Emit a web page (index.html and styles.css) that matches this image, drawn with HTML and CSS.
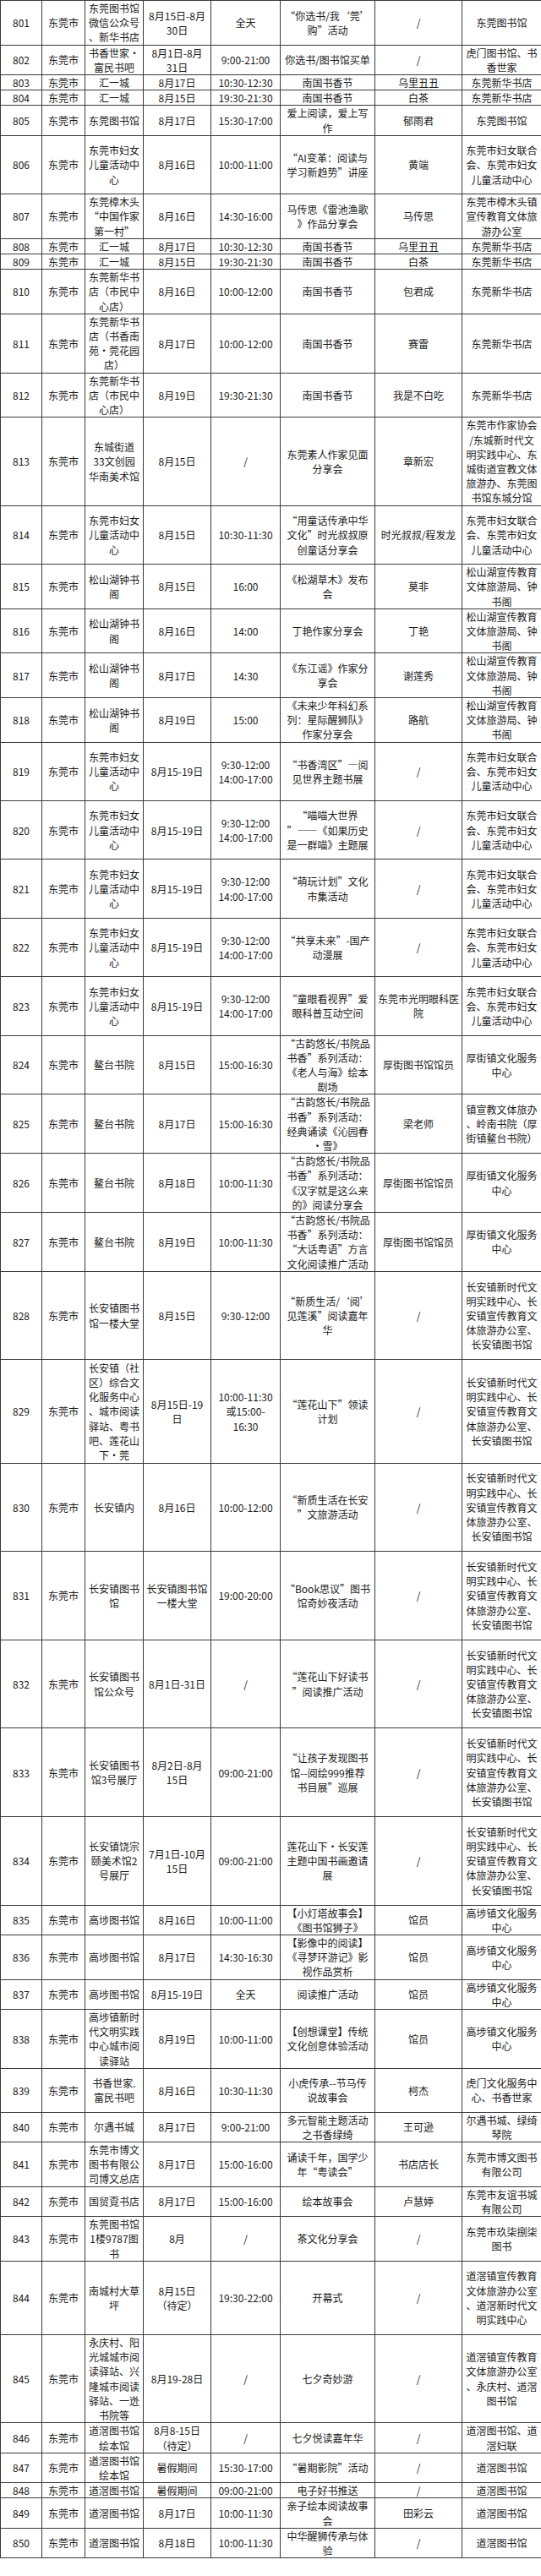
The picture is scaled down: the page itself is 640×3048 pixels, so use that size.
FILE: index.html
```html
<!DOCTYPE html>
<html lang="zh-CN">
<head>
<meta charset="utf-8">
<title>活动表</title>
<link rel="stylesheet" href="styles.css">
</head>
<body>
<table class="sheet">
<colgroup>
<col class="c-no"><col class="c-city"><col class="c-place"><col class="c-date"><col class="c-time"><col class="c-act"><col class="c-who"><col class="c-org">
</colgroup>
<tbody>
<tr class="n3"><td>801</td><td>东莞市</td><td>东莞图书馆<br>微信公众号<br>、新华书店</td><td>8月15日-8月<br>30日</td><td>全天</td><td>“你选书/我‘莞’<br>购”活动</td><td>/</td><td>东莞图书馆</td></tr>
<tr class="n2"><td>802</td><td>东莞市</td><td>书香世家·<br>富民书吧</td><td>8月1日-8月<br>31日</td><td>9:00-21:00</td><td>你选书/图书馆买单</td><td>/</td><td>虎门图书馆、书<br>香世家</td></tr>
<tr class="n1"><td>803</td><td>东莞市</td><td>汇一城</td><td>8月17日</td><td>10:30-12:30</td><td>南国书香节</td><td>乌里丑丑</td><td>东莞新华书店</td></tr>
<tr class="n1"><td>804</td><td>东莞市</td><td>汇一城</td><td>8月15日</td><td>19:30-21:30</td><td>南国书香节</td><td>白茶</td><td>东莞新华书店</td></tr>
<tr class="n2"><td>805</td><td>东莞市</td><td>东莞图书馆</td><td>8月17日</td><td>15:30-17:00</td><td>爱上阅读，爱上写<br>作</td><td>郁雨君</td><td>东莞图书馆</td></tr>
<tr class="n4"><td>806</td><td>东莞市</td><td>东莞市妇女<br>儿童活动中<br>心</td><td>8月16日</td><td>10:00-11:00</td><td>“AI变革：阅读与<br>学习新趋势”讲座</td><td>黄端</td><td>东莞市妇女联合<br>会、东莞市妇女<br>儿童活动中心</td></tr>
<tr class="n3"><td>807</td><td>东莞市</td><td>东莞樟木头<br>“中国作家<br>第一村”</td><td>8月16日</td><td>14:30-16:00</td><td>马传思《雷池渔歌<br>》作品分享会</td><td>马传思</td><td>东莞市樟木头镇<br>宣传教育文体旅<br>游办公室</td></tr>
<tr class="n1"><td>808</td><td>东莞市</td><td>汇一城</td><td>8月17日</td><td>10:30-12:30</td><td>南国书香节</td><td>乌里丑丑</td><td>东莞新华书店</td></tr>
<tr class="n1"><td>809</td><td>东莞市</td><td>汇一城</td><td>8月15日</td><td>19:30-21:30</td><td>南国书香节</td><td>白茶</td><td>东莞新华书店</td></tr>
<tr class="n3"><td>810</td><td>东莞市</td><td>东莞新华书<br>店（市民中<br>心店）</td><td>8月16日</td><td>10:00-12:00</td><td>南国书香节</td><td>包君成</td><td>东莞新华书店</td></tr>
<tr class="n4"><td>811</td><td>东莞市</td><td>东莞新华书<br>店（书香南<br>苑·莞花园<br>店）</td><td>8月17日</td><td>10:00-12:00</td><td>南国书香节</td><td>赛雷</td><td>东莞新华书店</td></tr>
<tr class="n3"><td>812</td><td>东莞市</td><td>东莞新华书<br>店（市民中<br>心店）</td><td>8月19日</td><td>19:30-21:30</td><td>南国书香节</td><td>我是不白吃</td><td>东莞新华书店</td></tr>
<tr class="n6"><td>813</td><td>东莞市</td><td>东城街道<br>33文创园<br>华南美术馆</td><td>8月15日</td><td>/</td><td>东莞素人作家见面<br>分享会</td><td>章新宏</td><td>东莞市作家协会<br>/东城新时代文<br>明实践中心、东<br>城街道宣教文体<br>旅游办、东莞图<br>书馆东城分馆</td></tr>
<tr class="n4"><td>814</td><td>东莞市</td><td>东莞市妇女<br>儿童活动中<br>心</td><td>8月15日</td><td>10:30-11:30</td><td>“用童话传承中华<br>文化”时光叔叔原<br>创童话分享会</td><td>时光叔叔/程发龙</td><td>东莞市妇女联合<br>会、东莞市妇女<br>儿童活动中心</td></tr>
<tr class="n3"><td>815</td><td>东莞市</td><td>松山湖钟书<br>阁</td><td>8月15日</td><td>16:00</td><td>《松湖草木》发布<br>会</td><td>莫非</td><td>松山湖宣传教育<br>文体旅游局、钟<br>书阁</td></tr>
<tr class="n3"><td>816</td><td>东莞市</td><td>松山湖钟书<br>阁</td><td>8月16日</td><td>14:00</td><td>丁艳作家分享会</td><td>丁艳</td><td>松山湖宣传教育<br>文体旅游局、钟<br>书阁</td></tr>
<tr class="n3"><td>817</td><td>东莞市</td><td>松山湖钟书<br>阁</td><td>8月17日</td><td>14:30</td><td>《东江谣》作家分<br>享会</td><td>谢莲秀</td><td>松山湖宣传教育<br>文体旅游局、钟<br>书阁</td></tr>
<tr class="n3"><td>818</td><td>东莞市</td><td>松山湖钟书<br>阁</td><td>8月19日</td><td>15:00</td><td>《未来少年科幻系<br>列：星际醒狮队》<br>作家分享会</td><td>路航</td><td>松山湖宣传教育<br>文体旅游局、钟<br>书阁</td></tr>
<tr class="n4"><td>819</td><td>东莞市</td><td>东莞市妇女<br>儿童活动中<br>心</td><td>8月15-19日</td><td>9:30-12:00<br>14:00-17:00</td><td>“书香湾区”—阅<br>见世界主题书展</td><td>/</td><td>东莞市妇女联合<br>会、东莞市妇女<br>儿童活动中心</td></tr>
<tr class="n4"><td>820</td><td>东莞市</td><td>东莞市妇女<br>儿童活动中<br>心</td><td>8月15-19日</td><td>9:30-12:00<br>14:00-17:00</td><td>“喵喵大世界<br>”——《如果历史<br>是一群喵》主题展</td><td>/</td><td>东莞市妇女联合<br>会、东莞市妇女<br>儿童活动中心</td></tr>
<tr class="n4"><td>821</td><td>东莞市</td><td>东莞市妇女<br>儿童活动中<br>心</td><td>8月15-19日</td><td>9:30-12:00<br>14:00-17:00</td><td>“萌玩计划”文化<br>市集活动</td><td>/</td><td>东莞市妇女联合<br>会、东莞市妇女<br>儿童活动中心</td></tr>
<tr class="n4"><td>822</td><td>东莞市</td><td>东莞市妇女<br>儿童活动中<br>心</td><td>8月15-19日</td><td>9:30-12:00<br>14:00-17:00</td><td>“共享未来”-国产<br>动漫展</td><td>/</td><td>东莞市妇女联合<br>会、东莞市妇女<br>儿童活动中心</td></tr>
<tr class="n4"><td>823</td><td>东莞市</td><td>东莞市妇女<br>儿童活动中<br>心</td><td>8月15-19日</td><td>9:30-12:00<br>14:00-17:00</td><td>“童眼看视界”爱<br>眼科普互动空间</td><td>东莞市光明眼科医<br>院</td><td>东莞市妇女联合<br>会、东莞市妇女<br>儿童活动中心</td></tr>
<tr class="n4"><td>824</td><td>东莞市</td><td>鳌台书院</td><td>8月15日</td><td>15:00-16:30</td><td>“古韵悠长/书院品<br>书香”系列活动：<br>《老人与海》绘本<br>剧场</td><td>厚街图书馆馆员</td><td>厚街镇文化服务<br>中心</td></tr>
<tr class="n4"><td>825</td><td>东莞市</td><td>鳌台书院</td><td>8月17日</td><td>15:00-16:30</td><td>“古韵悠长/书院品<br>书香”系列活动：<br>经典诵读《沁园春<br>•雪》</td><td>梁老师</td><td>镇宣教文体旅办<br>、岭南书院（厚<br>街镇鳌台书院）</td></tr>
<tr class="n4"><td>826</td><td>东莞市</td><td>鳌台书院</td><td>8月18日</td><td>10:00-11:30</td><td>“古韵悠长/书院品<br>书香”系列活动：<br>《汉字就是这么来<br>的》阅读分享会</td><td>厚街图书馆馆员</td><td>厚街镇文化服务<br>中心</td></tr>
<tr class="n4"><td>827</td><td>东莞市</td><td>鳌台书院</td><td>8月19日</td><td>10:00-11:30</td><td>“古韵悠长/书院品<br>书香”系列活动：<br>“大话粤语”方言<br>文化阅读推广活动</td><td>厚街图书馆馆员</td><td>厚街镇文化服务<br>中心</td></tr>
<tr class="n6"><td>828</td><td>东莞市</td><td>长安镇图书<br>馆一楼大堂</td><td>8月15日</td><td>9:30-12:00</td><td>“新质生活/‘阅’<br>见莲溪”阅读嘉年<br>华</td><td>/</td><td>长安镇新时代文<br>明实践中心、长<br>安镇宣传教育文<br>体旅游办公室、<br>长安镇图书馆</td></tr>
<tr class="n7"><td>829</td><td>东莞市</td><td>长安镇（社<br>区）综合文<br>化服务中心<br>、城市阅读<br>驿站、粤书<br>吧、莲花山<br>下·莞</td><td>8月15日-19<br>日</td><td>10:00-11:30<br>或15:00-<br>16:30</td><td>“莲花山下”领读<br>计划</td><td>/</td><td>长安镇新时代文<br>明实践中心、长<br>安镇宣传教育文<br>体旅游办公室、<br>长安镇图书馆</td></tr>
<tr class="n6"><td>830</td><td>东莞市</td><td>长安镇内</td><td>8月16日</td><td>10:00-12:00</td><td>“新质生活在长安<br>”文旅游活动</td><td>/</td><td>长安镇新时代文<br>明实践中心、长<br>安镇宣传教育文<br>体旅游办公室、<br>长安镇图书馆</td></tr>
<tr class="n6"><td>831</td><td>东莞市</td><td>长安镇图书<br>馆</td><td>长安镇图书馆<br>一楼大堂</td><td>19:00-20:00</td><td>“Book思议”图书<br>馆奇妙夜活动</td><td>/</td><td>长安镇新时代文<br>明实践中心、长<br>安镇宣传教育文<br>体旅游办公室、<br>长安镇图书馆</td></tr>
<tr class="n6"><td>832</td><td>东莞市</td><td>长安镇图书<br>馆公众号</td><td>8月1日-31日</td><td>/</td><td>“莲花山下好读书<br>”阅读推广活动</td><td>/</td><td>长安镇新时代文<br>明实践中心、长<br>安镇宣传教育文<br>体旅游办公室、<br>长安镇图书馆</td></tr>
<tr class="n6"><td>833</td><td>东莞市</td><td>长安镇图书<br>馆3号展厅</td><td>8月2日-8月<br>15日</td><td>09:00-21:00</td><td>“让孩子发现图书<br>馆--阅绘999推荐<br>书目展”巡展</td><td>/</td><td>长安镇新时代文<br>明实践中心、长<br>安镇宣传教育文<br>体旅游办公室、<br>长安镇图书馆</td></tr>
<tr class="n6"><td>834</td><td>东莞市</td><td>长安镇饶宗<br>颐美术馆2<br>号展厅</td><td>7月1日-10月<br>15日</td><td>09:00-21:00</td><td>莲花山下·长安莲<br>主题中国书画邀请<br>展</td><td>/</td><td>长安镇新时代文<br>明实践中心、长<br>安镇宣传教育文<br>体旅游办公室、<br>长安镇图书馆</td></tr>
<tr class="n2"><td>835</td><td>东莞市</td><td>高埗图书馆</td><td>8月16日</td><td>10:00-11:00</td><td>【小灯塔故事会】<br>《图书馆狮子》</td><td>馆员</td><td>高埗镇文化服务<br>中心</td></tr>
<tr class="n3"><td>836</td><td>东莞市</td><td>高埗图书馆</td><td>8月17日</td><td>14:30-16:30</td><td>【影像中的阅读】<br>《寻梦环游记》影<br>视作品赏析</td><td>馆员</td><td>高埗镇文化服务<br>中心</td></tr>
<tr class="n2"><td>837</td><td>东莞市</td><td>高埗图书馆</td><td>8月15-19日</td><td>全天</td><td>阅读推广活动</td><td>馆员</td><td>高埗镇文化服务<br>中心</td></tr>
<tr class="n4"><td>838</td><td>东莞市</td><td>高埗镇新时<br>代文明实践<br>中心城市阅<br>读驿站</td><td>8月19日</td><td>10:00-11:00</td><td>【创想课堂】传统<br>文化创意体验活动</td><td>馆员</td><td>高埗镇文化服务<br>中心</td></tr>
<tr class="n3"><td>839</td><td>东莞市</td><td>书香世家.<br>富民书吧</td><td>8月16日</td><td>10:30-11:30</td><td>小虎传承--节马传<br>说故事会</td><td>柯杰</td><td>虎门文化服务中<br>心、书香世家</td></tr>
<tr class="n2"><td>840</td><td>东莞市</td><td>尔遇书城</td><td>8月17日</td><td>9:00-21:00</td><td>多元智能主题活动<br>之书香绿绮</td><td>王可逊</td><td>尔遇书城、绿绮<br>琴院</td></tr>
<tr class="n3"><td>841</td><td>东莞市</td><td>东莞市博文<br>图书有限公<br>司博文总店</td><td>8月17日</td><td>15:00-16:00</td><td>诵读千年，国学少<br>年“粤读会”</td><td>书店店长</td><td>东莞市博文图书<br>有限公司</td></tr>
<tr class="n2"><td>842</td><td>东莞市</td><td>国贸覔书店</td><td>8月17日</td><td>15:00-16:00</td><td>绘本故事会</td><td>卢慧婷</td><td>东莞市友谊书城<br>有限公司</td></tr>
<tr class="n3"><td>843</td><td>东莞市</td><td>东莞图书馆<br>1楼9787图<br>书</td><td>8月</td><td>/</td><td>茶文化分享会</td><td>/</td><td>东莞市玖柒捌柒<br>图书</td></tr>
<tr class="n5"><td>844</td><td>东莞市</td><td>南城村大草<br>坪</td><td>8月15日<br>（待定）</td><td>19:30-22:00</td><td>开幕式</td><td>/</td><td>道滘镇宣传教育<br>文体旅游办公室<br>、道滘新时代文<br>明实践中心</td></tr>
<tr class="n6"><td>845</td><td>东莞市</td><td>永庆村、阳<br>光城城市阅<br>读驿站、兴<br>隆城市阅读<br>驿站、一迯<br>书院等</td><td>8月19-28日</td><td>/</td><td>七夕奇妙游</td><td>/</td><td>道滘镇宣传教育<br>文体旅游办公室<br>、永庆村、道滘<br>图书馆</td></tr>
<tr class="n2"><td>846</td><td>东莞市</td><td>道滘图书馆<br>绘本馆</td><td>8月8-15日<br>（待定）</td><td>/</td><td>七夕悦读嘉年华</td><td>/</td><td>道滘图书馆、道<br>滘妇联</td></tr>
<tr class="n2"><td>847</td><td>东莞市</td><td>道滘图书馆<br>绘本馆</td><td>暑假期间</td><td>15:30-17:00</td><td>“暑期影院”活动</td><td>/</td><td>道滘图书馆</td></tr>
<tr class="n1"><td>848</td><td>东莞市</td><td>道滘图书馆</td><td>暑假期间</td><td>09:00-21:00</td><td>电子好书推送</td><td>/</td><td>道滘图书馆</td></tr>
<tr class="n2"><td>849</td><td>东莞市</td><td>道滘图书馆</td><td>8月17日</td><td>10:00-11:30</td><td>亲子绘本阅读故事<br>会</td><td>田彩云</td><td>道滘图书馆</td></tr>
<tr class="n2"><td>850</td><td>东莞市</td><td>道滘图书馆</td><td>8月18日</td><td>10:00-11:30</td><td>中华醒狮传承与体<br>验</td><td>/</td><td>道滘图书馆</td></tr>
</tbody>
</table>
</body>
</html>
```

FILE: styles.css
```css
html, body {
  margin: 0;
  padding: 0;
  background: #ffffff;
}

.sheet {
  width: 640px;
  table-layout: fixed;
  border-collapse: collapse;
  font-family: "Noto Sans CJK SC", "Liberation Sans", sans-serif;
  font-size: 12px;
  line-height: 17.2px;
  color: #1a1a1a;
}

.c-no { width: 49px; }
.c-city { width: 51px; }
.c-place { width: 69px; }
.c-date { width: 80px; }
.c-time { width: 82px; }
.c-act { width: 112px; }
.c-who { width: 103px; }
.c-org { width: 94px; }

.sheet td {
  border: 1px solid #3a3a3a;
  padding: 0;
  text-align: center;
  vertical-align: middle;
  white-space: nowrap;
  overflow: hidden;
}

.sheet td:last-child {
  border-left-color: #6a6a6a;
}

/* row height = lines x 17.6px, minus the 1px collapsed border */
.n1 { height: 16.6px; }
.n2 { height: 34.2px; }
.n3 { height: 51.8px; }
.n4 { height: 69.4px; }
.n5 { height: 87px; }
.n6 { height: 104.6px; }
.n7 { height: 122.2px; }
```
